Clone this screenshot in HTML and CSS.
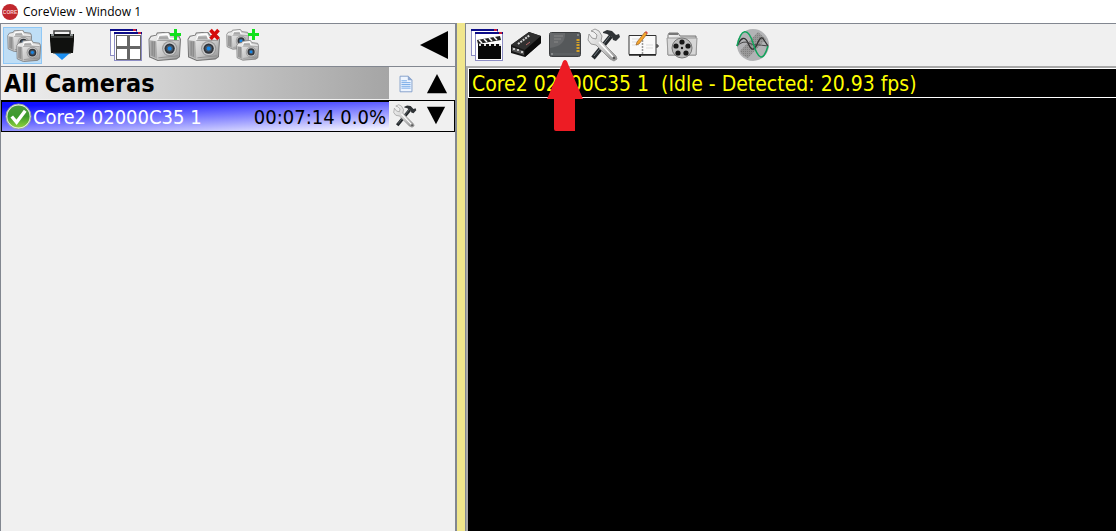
FILE: index.html
```html
<!DOCTYPE html>
<html lang="en">
<head>
<meta charset="utf-8">
<title>CoreView - Window 1</title>
<link rel="stylesheet" href="styles.css">
</head>
<body>
<svg class="defs" aria-hidden="true">
  <defs>
    <linearGradient id="metal" x1="0" y1="0" x2="1" y2="1"><stop offset="0" stop-color="#f8f8f8"/><stop offset=".6" stop-color="#c8c8c8"/><stop offset="1" stop-color="#8c8c8c"/></linearGradient>
    <linearGradient id="green" x1="0" y1="0" x2="0" y2="1"><stop offset="0" stop-color="#4c9a3c"/><stop offset=".5" stop-color="#3d9a2c"/><stop offset="1" stop-color="#8fd23c"/></linearGradient>
    <pattern id="dots" width="2" height="2" patternUnits="userSpaceOnUse"><rect width="2" height="2" fill="#999"/><rect width="1" height="1" fill="#808080"/></pattern>
    <symbol id="camera" viewBox="0 0 32 28">
      <path d="M1 7 3 4l5-1 1-2 11-1 2 3 8 1 1.500 3-1 17-3 2-18 1.500-8-3.500z" fill="url(#metal)" stroke="#777" stroke-width="1"/>
      <path d="M2 8l6 1 1 17-7-3z" fill="#aaa"/>
      <path d="M4 9v14M6 9v15" stroke="#777" stroke-width=".8"/>
      <path d="M9 8 11 3l8-1 2 4 9 1" fill="none" stroke="#fff" stroke-width="1.400"/>
      <path d="M11 4h8l1 3h-10z" fill="#a8a8a8"/>
      <path d="M9 8h21M10 25l19-2" stroke="#888" stroke-width=".8" fill="none"/>
      <circle cx="21" cy="16" r="7.400" fill="#999"/>
      <circle cx="21" cy="16" r="6.300" fill="#c9c9c9"/>
      <circle cx="21" cy="16" r="5" fill="#30343a"/>
      <circle cx="21" cy="16" r="3.200" fill="#46586b"/>
      <circle cx="21" cy="16" r="1.900" fill="#1687e8"/>
    </symbol>
    <symbol id="windows" viewBox="0 0 36 36">
      <rect x="2.500" y="2.500" width="26" height="26" fill="#fff" stroke="#8d8dc4"/>
      <path d="M2 3h27" stroke="#0c0c88" stroke-width="2"/><path d="M25 3h3" stroke="#f22" stroke-width="1.500"/>
      <rect x="6.500" y="6.500" width="27" height="27" fill="#fff" stroke="#8d8dc4"/>
      <path d="M6 6h28" stroke="#0c0c88" stroke-width="2"/><path d="M30 6h3" stroke="#f22" stroke-width="1.500"/>
    </symbol>
    <symbol id="tools" viewBox="0 0 36 36">
      <path d="M25 9 7 31" stroke="#24282b" stroke-width="4.500"/>
      <path d="M24 9 8 29" stroke="#727b80" stroke-width="1"/>
      <path d="M17 5 21 3l5 1 4 4 3-1 1 3-4 4-3-1-1-3-5-3-4-1z" fill="#303437"/>
      <path d="M5 4 9 2l4 2 3 5-1 5 15 15 1 3-3 2-4-2L10 18l-5-1-3-4 1-6 3 4 4 1 1-4-3-3z" fill="url(#metal)" stroke="#888" stroke-width=".8"/>
      <path d="M13 15 27 30" stroke="#fff" stroke-width="1.500"/><circle cx="28" cy="31" r="1.300" fill="#555"/>
    </symbol>
  </defs>
</svg>

<header class="titlebar">
  <svg class="app-logo" viewBox="0 0 16 16" aria-hidden="true"><circle cx="8" cy="8" r="8" fill="#c1272d"/><text x="8" y="10" class="logo-text">CORE</text></svg>
  <span>CoreView - Window 1</span>
</header>

<div class="workspace">
  <aside class="cameras">
    <div class="toolbar" role="toolbar" aria-label="Cameras">
      <button class="tool selected" aria-label="Camera list"><svg class="icon" viewBox="0 0 36 36"><use href="#camera" x="2" y="3" width="25" height="22"/><use href="#camera" x="11" y="13" width="25" height="22"/></svg></button>
      <button class="tool" aria-label="Battery"><svg class="icon" viewBox="0 0 36 36"><path d="M10 26h16l-8 7z" fill="#1c8ff0"/><path d="M10 7V4h16v3" fill="none" stroke="#444" stroke-width="1.500"/><path d="M6 7h24v6l-1 13H7L6 13z" fill="#10110f"/><path d="M7 10h22" stroke="#666b66"/><path d="M9 26h18" stroke="#303530"/><path d="M7 8h3M26 8h3" stroke="#8a9090" stroke-width="2"/></svg></button>
      <button class="tool spaced" aria-label="Window grid"><svg class="icon" viewBox="0 0 36 36"><use href="#windows"/><path d="M8 8h25v25H8z" fill="#666"/><path d="M9 9h10v10H9zM22 9h10v10H22zM9 22h10v10H9zM22 22h10v10H22z" fill="#fff"/></svg></button>
      <button class="tool" aria-label="Add camera"><svg class="icon" viewBox="0 0 36 36"><use href="#camera" x="1" y="5" width="33" height="29"/><path d="M28.500 2v11M23 7.500h11" stroke="#10e01c" stroke-width="3"/></svg></button>
      <button class="tool" aria-label="Remove camera"><svg class="icon" viewBox="0 0 36 36"><use href="#camera" x="1" y="5" width="33" height="29"/><path d="M24.500 3l8 9M32.500 3l-8 9" stroke="#d50a0a" stroke-width="3.500"/></svg></button>
      <button class="tool" aria-label="Add camera group"><svg class="icon" viewBox="0 0 36 36"><use href="#camera" x="1" y="2" width="23" height="21"/><use href="#camera" x="11" y="13" width="23" height="21"/><path d="M28.500 2v11M23 7.500h11" stroke="#10e01c" stroke-width="3"/></svg></button>
      <button class="tool collapse" aria-label="Collapse panel"><svg class="icon" viewBox="0 0 36 36"><path d="M4 18 32 4v28z"/></svg></button>
    </div>

    <div class="row group">
      <h1 class="group-name">All Cameras</h1>
      <button class="row-tool" aria-label="Notes"><svg class="small-icon" viewBox="0 0 24 24"><path d="M5.500 3.500h9l4 4v13h-13z" fill="#eef5ff" stroke="#809dc8"/><path d="M14 3v5h5z" fill="#8fa8d0"/><path d="M7 8.500h6M7 10.500h10M7 12.500h10M7 14.500h10M7 16.500h10" stroke="#6fa5e6"/></svg></button>
      <button class="row-tool" aria-label="Move up"><svg class="small-icon" viewBox="0 0 24 24"><path d="M12 1 23 22H1z"/></svg></button>
    </div>
    <div class="row camera">
      <div class="camera-info">
        <svg class="status" viewBox="0 0 28 28" role="img" aria-label="Ready"><circle cx="14" cy="14" r="13" fill="#e8f1e4" stroke="#9aa89a"/><circle cx="14" cy="14" r="11.500" fill="url(#green)"/><path d="M7 14l5 6 9-12" fill="none" stroke="#fff" stroke-width="3.500"/></svg>
        <span class="camera-name">Core2 02000C35 1</span>
        <span class="camera-time">00:07:14 0.0%</span>
      </div>
      <button class="row-tool" aria-label="Camera settings"><svg class="small-icon" viewBox="1 1 34 34"><use href="#tools" width="36" height="36"/></svg></button>
      <button class="row-tool" aria-label="Move down"><svg class="small-icon" viewBox="0 0 24 24"><path d="M2 2h20L12 21z"/></svg></button>
    </div>
  </aside>

  <main class="viewer">
    <div class="toolbar" role="toolbar" aria-label="Viewer">
      <button class="tool" aria-label="Clips"><svg class="icon" viewBox="0 0 36 36"><use href="#windows"/><path d="M9 17h23v15H9z" fill="#080808"/><path d="M8 13 31 9l1 4-23 4z" fill="#222"/><path d="M10 13l3 3M15 12l3 3M20 11l3 3M25 10l3 3" stroke="#fff" stroke-width="1.500"/><path d="M10 18h22" stroke="#ddd" stroke-width="2" stroke-dasharray="2 3"/></svg></button>
      <button class="tool" aria-label="Recorder"><svg class="icon" viewBox="0 0 36 36"><path d="M3 18 21 5l12 4v7L17 30 3 26z" fill="#171717"/><path d="M3 18 21 5l12 4-16 14z" fill="#303030"/><path d="M17 23 33 9v7L17 30z" fill="#0b0b0b"/><path d="M10 17 22 8" stroke="#d5d5d5" stroke-width="2" stroke-dasharray="2 1"/><path d="M18 18l4-3" stroke="#b66" stroke-width="1"/><path d="M4 20l12 4v4L4 24z" fill="#555"/><path d="M6 21v2M10 22v2M14 24v2" stroke="#eee" stroke-width="1.500"/></svg></button>
      <button class="tool" aria-label="Solid-state drive"><svg class="icon" viewBox="0 0 36 36"><rect x="2.500" y="5.500" width="31" height="24" rx="2" fill="#55585a" stroke="#3c3e40"/><path d="M3 6h15q1 13-15 15z" fill="#67696b"/><path d="M7 9h9M7 12h7M7 15h4" stroke="#888" stroke-width="1"/><path d="M31 12v4M31 17v8" stroke="#d5a126" stroke-width="3" stroke-dasharray="2 1"/><path d="M4 27h28" stroke="#65686a"/><circle cx="31" cy="8" r=".8" fill="#bbb"/><circle cx="5" cy="27" r=".8" fill="#bbb"/></svg></button>
      <button class="tool" aria-label="Settings"><svg class="icon" viewBox="0 0 36 36"><use href="#tools"/></svg></button>
      <button class="tool" aria-label="Metadata"><svg class="icon" viewBox="0 0 36 36"><path d="M4 8.500h13l1 1 1-1h12v19H4z" fill="#fafafa" stroke="#343434" stroke-width="1"/><path d="M4 28h27" stroke="#242424" stroke-width="1.500"/><path d="M17.500 10v17" stroke="#999" stroke-width="1.500" stroke-dasharray="2 1"/><path d="M7 12h7M7 15h7M7 18h7M21 18h7M21 21h7" stroke="#ddd"/><path d="M31 18h2v2h-2" fill="none" stroke="#222"/><path d="M15 28v2" stroke="#222" stroke-width="2"/><path d="M12 15 20 5l2 2-8 10-3 1z" fill="#f5a52c" stroke="#9b6429" stroke-width=".7"/><path d="M20 5l1-1 2 2-1 1z" fill="#d8473c"/></svg></button>
      <button class="tool" aria-label="Footage"><svg class="icon" viewBox="0 0 36 36"><path d="M4 28V8l1-2h9l2 3h16v19z" fill="url(#metal)" stroke="#777"/><path d="M5 7h9" stroke="#777" stroke-width="2"/><path d="M3 11h30l-1 17H4z" fill="#d7d7d7" stroke="#999"/><circle cx="18" cy="21" r="10" fill="#bbb" stroke="#777"/><g fill="#171717"><circle cx="18" cy="15" r="2.600"/><circle cx="24" cy="19" r="2.600"/><circle cx="22" cy="26" r="2.600"/><circle cx="14" cy="26" r="2.600"/><circle cx="12" cy="19" r="2.600"/><circle cx="18" cy="21" r="1.200"/></g></svg></button>
      <button class="tool spaced-wide" aria-label="Waveform"><svg class="icon" viewBox="0 0 36 36"><circle cx="18" cy="18" r="16" fill="#b2b3b5"/><path d="M5 24 23 5l8 7-18 19q-6-2-8-7z" fill="url(#dots)"/><path d="M2 19C6 10 10 9 13 16s5 7 7 5 5-15 9-8l4 6" fill="none" stroke="#303030" stroke-width="1.300"/><path d="M2 19q6-6 12-3t5 2 14 1" fill="none" stroke="#444"/><path d="M2 19C6 1 13 0 18 16s10 20 15 3" fill="none" stroke="#12a45c" stroke-width="1.500"/></svg></button>
    </div>
    <section class="screen"><div class="caption">Core2 02000C35 1&nbsp; (Idle - Detected: 20.93 fps)</div></section>
    <svg class="pointer" viewBox="0 0 36 72" aria-hidden="true"><path d="M18 0q2 0 3 4l15 35H28v32H9q-2 0-2-2V39H0L15 4q1-4 3-4z" fill="#ed1c24"/></svg>
  </main>
</div>
</body>
</html>
```
FILE: styles.css
```css
* { box-sizing: border-box; }
html, body { height: 100%; }
body {
  margin: 0;
  display: flex;
  flex-direction: column;
  overflow: hidden;
  background: #fff;
  color: #000;
  font-family: Tahoma, "DejaVu Sans Condensed", "Noto Sans", sans-serif;
}
button { border: 0; padding: 0; background: none; font: inherit; }
svg { display: block; }
.defs { position: absolute; width: 0; height: 0; }

.titlebar {
  display: flex;
  align-items: center;
  gap: 5px;
  height: 23px;
  padding-left: 2px;
  font: 12px "Segoe UI", "Open Sans", sans-serif;
}
.app-logo { width: 16px; height: 16px; }
.logo-text {
  font: bold 5px "Liberation Sans", sans-serif;
  fill: #f4c8c8;
  text-anchor: middle;
}

.workspace {
  flex: 1;
  display: grid;
  grid-template-columns: 457px 1fr;
  column-gap: 8px;
  min-height: 0;
  background: #f0e68c;
}
.cameras {
  background: #f0f0f0;
  border: 2px solid #828790;
  border-width: 1px 2px 0 1px;
}
.toolbar {
  display: flex;
  align-items: center;
  height: 42px;
  background: #f0f0f0;
}
.cameras .toolbar { height: 43px; padding: 0 2px 0 2px; border-bottom: 1px solid #828790; }
.tool {
  display: flex;
  align-items: center;
  justify-content: center;
  width: 39px;
  height: 37px;
}
.selected { background: #bfdef5; border: 1px solid #90c8f6; }
.icon { flex: none; width: 36px; height: 36px; }
.spaced { margin-left: 25px; }
.spaced-wide { margin-left: 32px; }
.collapse { margin-left: auto; }

.row { display: flex; align-items: stretch; height: 33px; margin-left: 1px; }
.group-name {
  flex: 1;
  margin: 0 0 1px;
  padding-left: 2px;
  background: linear-gradient(90deg, #f0f0f0, #a5a5a5);
  font-size: 25px;
  line-height: 34px;
}
.row-tool { display: flex; align-items: center; justify-content: center; width: 33px; }
.row-tool:last-child { width: 30px; margin-right: 3px; }
.small-icon { width: 22px; height: 22px; }
.camera { height: 32px; border: 1px solid #000; margin-left: 0; }
.camera-info {
  flex: 1;
  display: flex;
  align-items: center;
  padding: 0 3px;
  border-top: 1px solid #000;
  background: linear-gradient(177deg, #1010ff 10%, #7777ff 50%, #f0f0ff 95%);
  font-size: 20px;
  line-height: 30px;
}
.status { width: 27px; height: 27px; margin-right: 1px; }
.camera-name { color: #fff; }
.camera-time { margin-left: auto; }
.camera .row-tool { width: 32px; }
.camera .row-tool:last-child { width: 30px; margin-right: 3px; }
.camera .row-tool:not(:last-child) .small-icon { width: 24px; height: 24px; }

.viewer {
  position: relative;
  display: flex;
  flex-direction: column;
  border: 1px solid #828790;
  border-width: 1px 0 0 1px;
  background: #a8a8a8;
}
.viewer .toolbar { padding-left: 1px; }
.screen { flex: 1; margin: 2px 0 0 2px; background: #000; }
.caption {
  height: 30px;
  padding-left: 3px;
  border: 1px solid #fff;
  border-right: 0;
  color: #ff0;
  font-size: 21px;
  line-height: 30px;
}
.pointer { position: absolute; left: 81px; top: 36px; width: 36px; height: 72px; }
```
